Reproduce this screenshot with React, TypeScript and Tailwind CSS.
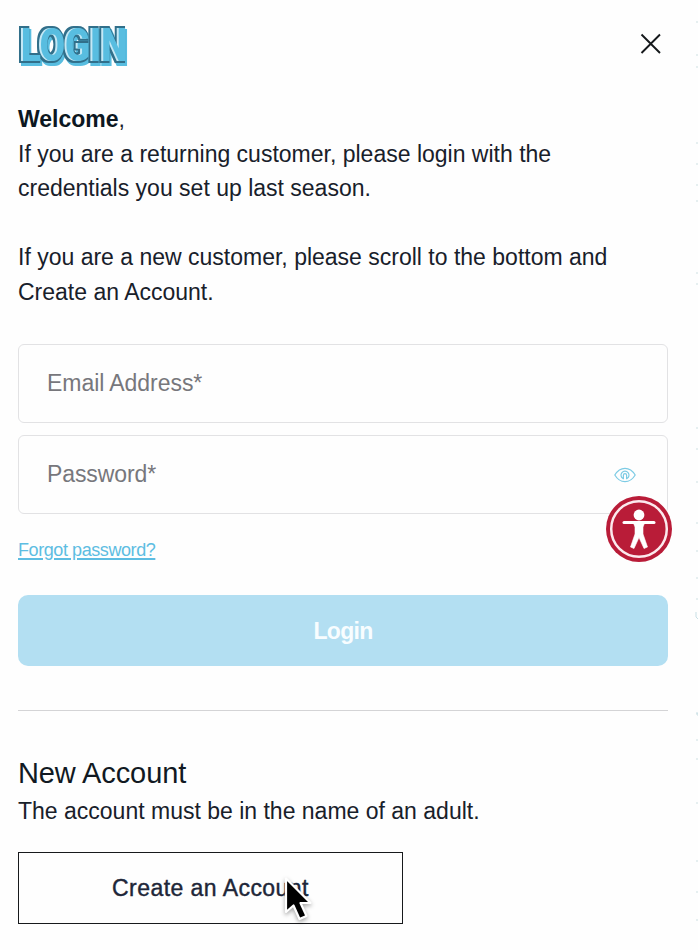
const fontFamily = "font-['Liberation_Sans',Arial,sans-serif]"

// One word, with the outline, highlight and offset shadow built by the filter
const Logo = () => (
  <svg width="160" height="72" viewBox="0 0 160 72" role="img" className="overflow-visible">
    <defs>
      <filter id="logo" x="-10%" y="-20%" width="125%" height="145%" colorInterpolationFilters="sRGB">
        <feMorphology in="SourceAlpha" operator="dilate" radius="1.7" result="wide" />
        <feGaussianBlur in="wide" stdDeviation="0.6" result="outer" />
        <feGaussianBlur in="SourceAlpha" stdDeviation="0.4" result="inner" />
        <feFlood floodColor="#58bde0" />
        <feComposite in2="outer" operator="in" result="shadowColor" />
        <feOffset in="shadowColor" dx="2" dy="3" result="shadow" />
        <feFlood floodColor="#316f8a" />
        <feComposite in2="outer" operator="in" result="outline" />
        <feFlood floodColor="#c4e8f5" />
        <feComposite in2="inner" operator="in" result="light" />
        <feOffset in="inner" dx="1.6" dy="0.4" result="shifted" />
        <feFlood floodColor="#58bde0" />
        <feComposite in2="shifted" operator="in" result="face" />
        <feMerge>
          <feMergeNode in="shadow" />
          <feMergeNode in="outline" />
          <feMergeNode in="light" />
          <feMergeNode in="face" />
        </feMerge>
      </filter>
    </defs>
    <g filter="url(#logo)">
      <text
        x="1"
        y="48"
        fontFamily="Roboto, 'Liberation Sans', sans-serif"
        fontWeight="900"
        fontSize="46"
        textLength="106"
        lengthAdjust="spacingAndGlyphs"
        fill="#58bde0"
      >
        LOGIN
      </text>
    </g>
  </svg>
)

const CloseIcon = () => (
  <svg width="22" height="22" viewBox="0 0 22 22" fill="none" stroke="#15181b" strokeWidth="1.9">
    <path d="M1.5 1.5 20 20M20 1.5 1.5 20" />
  </svg>
)

const EyeIcon = () => (
  <svg width="22" height="16" viewBox="0 0 22 16" fill="none" stroke="#7ccbe4" strokeWidth="1.2">
    <path d="M.8 8C3.5 3.5 7 1.3 11 1.3S18.5 3.5 21.2 8C18.5 12.5 15 14.7 11 14.7S3.5 12.5.8 8Z" />
    <path d="M9 11.6A4 4 0 1 1 13 11.6M9.4 12.2V8.3a1.6 1.6 0 0 1 3.2 0V12.2" />
  </svg>
)

const AccessibilityIcon = () => (
  <svg width="66" height="66" viewBox="0 0 66 66">
    <circle cx="33" cy="33" r="33" fill="#b91c38" />
    <circle cx="33" cy="33" r="27.8" fill="none" stroke="#fce9ed" strokeWidth="2.5" />
    <circle cx="33" cy="19" r="5.4" fill="#fff" />
    <path d="M18 26.5H48" stroke="#fff" strokeWidth="3" strokeLinecap="round" />
    <path
      d="M27 26H39L37 31V38L41.5 51 38 52.5 33 41.5 28 52.5 24.5 51 29 38V31Z"
      fill="#fff"
      stroke="#fff"
      strokeWidth=".6"
      strokeLinejoin="round"
    />
  </svg>
)

const Cursor = () => (
  <svg width="38" height="52" viewBox="0 0 38 52" className="drop-shadow-[0_2px_2px_rgba(0,0,0,0.35)]">
    <path
      d="M5 2.5V36L12.5 29.5 18.5 43 25.5 40 19.5 27H29.5Z"
      fill="#000"
      stroke="#fff"
      strokeWidth="2.2"
      strokeLinejoin="round"
    />
  </svg>
)

const specks = [21, 54, 66, 142, 163, 184, 200, 272, 283, 427, 448, 481, 522, 550, 577, 598, 713, 739, 758, 802, 860, 891, 919]

const PageEdge = () => (
  <svg width="3" height="950" viewBox="0 0 3 950">
    {specks.map((y) => (
      <rect key={y} x="1" y={y} width="2" height="2" fill="#e6eff0" />
    ))}
    <path d="M1 612v5l2 2M1 713h2v3" fill="none" stroke="#c8dfe5" />
  </svg>
)

export default function App() {
  return (
    <div className={`relative h-[950px] w-[698px] overflow-hidden bg-[#fefefe] pl-[18px] pr-[30px] text-[23px] leading-[34.5px] text-[#18202a] ${fontFamily}`}>
      <header className="flex h-[102px] items-start justify-between pt-[13px]">
        <Logo />
        <button aria-label="Close" className="mr-1.5 mt-5">
          <CloseIcon />
        </button>
      </header>

      <div className="whitespace-nowrap">
        <p><b className="text-[#0c1721]">Welcome</b>,</p>
        <p>If you are a returning customer, please login with the</p>
        <p>credentials you set up last season.</p>
        <p className="mt-[34.5px]">If you are a new customer, please scroll to the bottom and</p>
        <p>Create an Account.</p>
      </div>

      <form className="mt-[35px]">
        <div className="flex h-[79px] items-center rounded-md border-[1.5px] border-[#e2e2e4] px-7 text-[#77777c]">
          <span className="tracking-[-0.05px]">Email Address*</span>
        </div>
        <div className="mt-3 flex h-[79px] items-center justify-between rounded-md border-[1.5px] border-[#e2e2e4] pl-7 pr-[31px] text-[#77777c]">
          <span className="tracking-[-0.1px]">Password*</span>
          <EyeIcon />
        </div>
        <a className="mt-[21px] block h-[30px] text-[18px] leading-[30px] tracking-[-0.42px] text-[#5dbde2] underline decoration-[1.5px] underline-offset-2">
          Forgot password?
        </a>
        <button
          type="button"
          className="mt-[30px] flex h-[71px] w-full items-center justify-center rounded-[10px] bg-[#b3dff2] pt-0.5 font-bold tracking-[-0.7px] text-[#f8fdff]"
        >
          Login
        </button>
      </form>

      <hr className="mt-[43.5px] border-t-[1.5px] border-[#d4d4d6]" />

      <section className="mt-[42.5px]">
        <h2 className="text-[29px] leading-10 tracking-[-0.1px] text-[#111922]">New Account</h2>
        <p className="mt-px">The account must be in the name of an adult.</p>
        <button className="mt-[23px] flex h-[72px] w-[385px] items-center justify-center border-[1.5px] border-[#17191c] pt-0.5 tracking-[0.45px] text-[#202638] [-webkit-text-stroke:0.4px]">
          Create an Account
        </button>
      </section>

      <button aria-label="Accessibility" className="absolute left-[606px] top-[496px]">
        <AccessibilityIcon />
      </button>
      <div className="absolute left-[281px] top-[876px]">
        <Cursor />
      </div>
      <div className="absolute right-0 top-0">
        <PageEdge />
      </div>
    </div>
  )
}
